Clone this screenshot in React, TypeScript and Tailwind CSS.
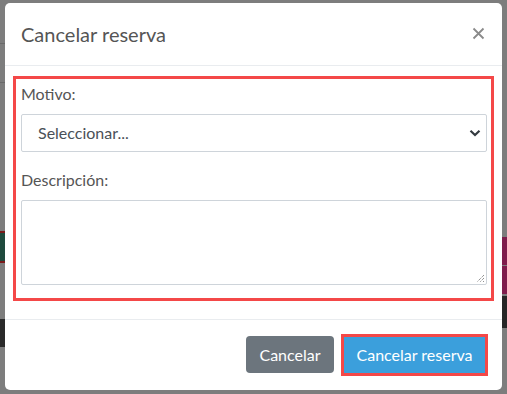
import React from "react";

export default function App() {
  return (
    <div
      className="w-[507px] h-[394px] overflow-hidden bg-[#7d7d7d] flex items-start"
      style={{ fontFamily: "Lato, 'Open Sans', sans-serif" }}
    >
      {/* dimmed page behind the overlay: left edge */}
      <div className="w-[5px] h-full flex flex-col shrink-0">
        <div className="h-[43px]" />
        <div className="h-px bg-[#6a6a6a]" />
        <div className="h-[38px]" />
        <div className="h-px bg-[#6a6a6a]" />
        <div className="h-[148px]" />
        <div className="h-[32px] bg-[#1f4a3d] border-t-2 border-b-2 border-[#7a1a1a]" />
        <div className="h-[56px]" />
        <div className="h-[28px] bg-[#2a2a2a]" />
        <div className="flex-1" />
      </div>

      {/* modal */}
      <div className="mt-[3px] w-[497px] h-[387px] shrink-0 bg-white rounded-[5px] flex flex-col">
        {/* header */}
        <div className="h-[63px] flex items-center justify-between pl-[16px] pr-[16px] border-b border-[#e9ecef]">
          <div className="text-[20px] leading-[30px] text-[#555555]">Cancelar reserva</div>
          <svg width="13" height="13" viewBox="0 0 13 13" className="mr-[1px] -mt-[1px]">
            <path d="M1.5 1.5 L11.5 11.5 M11.5 1.5 L1.5 11.5" stroke="#8a8a8a" strokeWidth="1.8" />
          </svg>
        </div>

        {/* body */}
        <div className="pt-[10px] pb-[18px] px-[8px] border-b border-[#e9ecef]">
          <div className="border-[3px] border-[#f44848] pt-[3px] pl-[5px] pr-[4px] pb-[13px]">
            <div className="text-[16px] leading-[24px] text-[#555555] mb-[8px]">Motivo:</div>
            <div className="h-[38px] border border-[#ced4da] rounded-[2px] flex items-center justify-between pl-[16px] pr-[5px]">
              <span className="text-[16px] text-[#495057]">Seleccionar...</span>
              <svg width="12" height="8" viewBox="0 0 12 8">
                <path d="M1.5 1.8 L6 6 L10.5 1.8" stroke="#343a40" strokeWidth="2.2" fill="none" />
              </svg>
            </div>
            <div className="text-[16px] leading-[24px] text-[#555555] mt-[16px] mb-[8px]">Descripción:</div>
            <div className="h-[85px] border border-[#ced4da] rounded-[2px] flex items-end justify-end p-px">
              <svg width="10" height="10" viewBox="0 0 10 10">
                <path d="M9 2 L2 9 M9 5 L5 9 M9 8 L8 9" stroke="#666" strokeWidth="1" strokeDasharray="1 1" />
              </svg>
            </div>
          </div>
        </div>

        {/* footer */}
        <div className="flex-1 flex items-center justify-end pr-[14px] gap-[7px]">
          <button className="w-[88px] h-[37px] rounded-[4px] bg-[#6c757d] text-white text-[16px] mt-[-1px]">
            Cancelar
          </button>
          <div className="border-[3px] border-[#f44848]">
            <button className="w-[141px] h-[36px] bg-[#3b9fdc] text-white text-[16px]">
              Cancelar reserva
            </button>
          </div>
        </div>
      </div>

      {/* dimmed page behind the overlay: right edge */}
      <div className="w-[5px] h-full flex flex-col shrink-0">
        <div className="h-[237px]" />
        <div className="h-[28px] bg-[#7e1d4c]" />
        <div className="h-px" />
        <div className="h-[28px] bg-[#7e1d4c]" />
        <div className="h-[2px]" />
        <div className="h-[32px] bg-[#262626]" />
        <div className="flex-1" />
      </div>
    </div>
  );
}
